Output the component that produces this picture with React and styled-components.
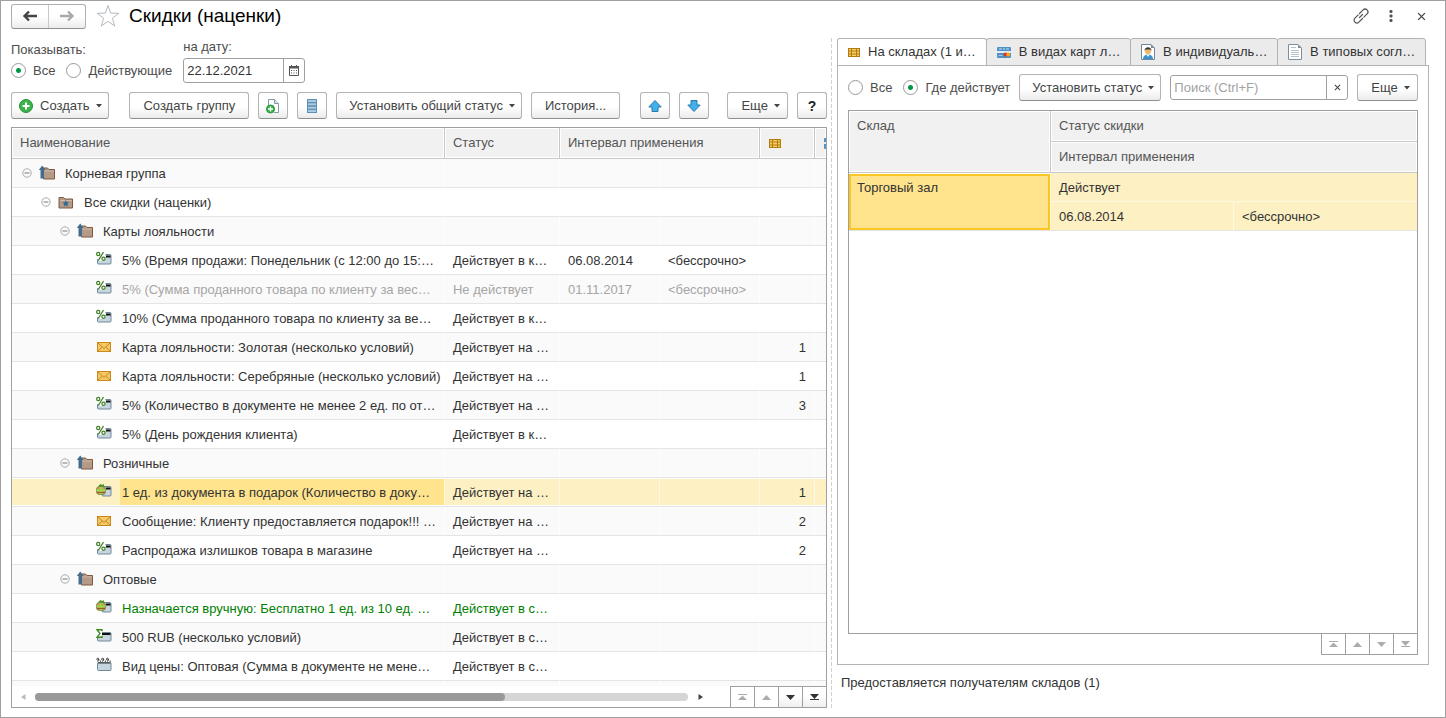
import React from "react";
import styled, { createGlobalStyle, css } from "styled-components";

const GlobalStyle = createGlobalStyle`
  * {
    box-sizing: border-box;
  }

  body {
    margin: 0;
    background: #fff;
  }

  body, button, input {
    font-family: "Liberation Sans", Arial, sans-serif;
    font-size: 13px;
    line-height: 16px;
  }
`;

const Window = styled.div`
  height: 100vh;
  display: flex;
  flex-direction: column;
  border: 1px solid #a0a0a0;
  color: #333;
`;

const TitleBar = styled.header`
  display: flex;
  align-items: center;
  height: 37px;
  padding: 0 9px 7px 10px;
  flex: none;
`;

const Title = styled.h1`
  margin: 0 auto 0 9px;
  font-size: 19px;
  line-height: 24px;
  font-weight: normal;
  color: #000;
`;

const History = styled.div`
  display: flex;
  margin-right: 10px;
  border: 1px solid #b0b0b0;
  border-bottom-color: #909090;
  border-radius: 3px;
  background: linear-gradient(#fff 50%, #ececec);
`;

const HistoryButton = styled.button`
  width: 36px;
  height: 23px;
  padding: 0;
  border: 0;
  background: none;
  display: flex;
  align-items: center;
  justify-content: center;

  & + & {
    width: 37px;
    border-left: 1px solid #c8c8c8;
  }
`;

const PlainButton = styled.button`
  width: ${p => p.$width || 30}px;
  height: 24px;
  padding: 0;
  border: 0;
  background: none;
  display: flex;
  align-items: center;
  justify-content: center;
  flex: none;
`;

const Body = styled.main`
  flex: 1;
  min-height: 0;
  display: grid;
  grid-template-columns: minmax(0, 816fr) 10px minmax(0, 592fr);
  padding: 0 16px 9px 10px;
`;

const Pane = styled.section`
  display: flex;
  flex-direction: column;
  min-width: 0;
  min-height: 0;
`;

const Splitter = styled.div`
  margin-left: 4px;
  width: 1px;
  background: repeating-linear-gradient(#d0d0d0 0 4px, transparent 4px 6px);
`;

const Filters = styled.div`
  display: flex;
  align-items: flex-end;
  gap: 11px;
  padding-top: 1px;
  color: #4d4d4d;
`;

const RadioRow = styled.div`
  display: flex;
  align-items: center;
  gap: 11px;
  height: 25px;
`;

const RadioLabel = styled.label`
  display: flex;
  align-items: center;
  gap: 7px;
  white-space: nowrap;
  color: #4d4d4d;
`;

const RadioInput = styled.input`
  appearance: none;
  width: 15px;
  height: 15px;
  margin: 0;
  border: 1px solid #999;
  border-radius: 50%;
  background: #fff;

  &:checked {
    background: radial-gradient(circle, #009646 0 2px, #fff 3px);
  }
`;

const DateField = styled.div`
  display: flex;
  flex-direction: column;
  gap: 3px;
`;

const InputBox = styled.div`
  display: flex;
  height: 25px;
  min-width: 0;
  flex: ${p => (p.$grow ? 1 : "none")};
  border: 1px solid #a0a0a0;
  border-radius: 3px;

  input {
    flex: 1;
    width: ${p => (p.$grow ? "auto" : "99px")};
    min-width: 0;
    padding: 0 3px;
    border: 0;
    outline: 0;
    background: none;
    color: #333;
  }

  input::placeholder {
    color: #a3a3a3;
  }

  button {
    width: 21px;
    height: 23px;
    border-left: 1px solid #a0a0a0;
  }
`;

const Toolbar = styled.div`
  display: flex;
  align-items: center;
  gap: 9px;
  padding: ${p => p.$padding};
`;

const ToolButton = styled.button`
  display: flex;
  align-items: center;
  justify-content: center;
  flex: none;
  gap: 6px;
  height: 27px;
  padding: 0 13px;
  border: 1px solid #b3b3b3;
  border-bottom-color: #8f8f8f;
  border-radius: 3px;
  background: linear-gradient(#fff 55%, #ebebeb);
  color: #444;
  white-space: nowrap;

  ${p =>
    p.$menu &&
    css`
      min-width: 61px;
      padding: 0 6px 0 12px;
    `}
  ${p =>
    p.$square &&
    css`
      width: 30px;
      padding: 0;
    `}
  ${p =>
    p.$lead &&
    css`
      gap: 7px;
      padding-left: 7px;
    `}
`;

const Gap = styled.span`
  width: ${p => (p.$grow ? 0 : 2)}px;
  flex: ${p => (p.$grow ? "1" : "none")};
`;

const Help = styled.span`
  font-weight: bold;
  font-size: 14px;
  color: #222;
`;

const GridBox = styled.div`
  display: flex;
  flex-direction: column;
  flex: 1;
  min-height: 0;
  border: 1px solid #a0a0a0;
`;

const GridView = styled.div`
  flex: 1;
  min-height: 0;
  overflow: hidden;
`;

const Table = styled.table`
  width: 100%;
  table-layout: fixed;
  border-collapse: separate;
  border-spacing: 0;
`;

const Th = styled.th`
  height: 31px;
  padding: 0 8px;
  overflow: hidden;
  white-space: nowrap;
  text-align: left;
  vertical-align: ${p => (p.$top ? "top" : "middle")};
  padding-top: ${p => (p.$top ? 7 : 0)}px;
  font-weight: normal;
  color: #555;
  background: #f1f1f1;
  border-right: 1px solid #c8c8c8;
  border-bottom: 1px solid #c8c8c8;
  box-shadow: inset 0 0 0 1px #fff;

  &:last-child {
    border-right: 0;
  }
`;

const IconTh = styled(Th)`
  padding: 0 0 0 9px;

  svg {
    display: block;
  }
`;

const Td = styled.td`
  height: 29px;
  padding: 2px 8px 0;
  overflow: hidden;
  white-space: nowrap;
  text-overflow: ellipsis;
  text-align: ${p => p.$align || "left"};
  border-right: 1px solid rgba(255, 255, 255, 0.6);
  border-bottom: 1px solid #e4e4e4;

  &:last-child {
    border-right: 0;
  }
`;

const NameTd = styled(Td)`
  padding: 0;
`;

const rowColors = {
  muted: "#a6a6a6",
  manual: "#008000"
};

const Row = styled.tr`
  color: ${p => rowColors[p.$tone] || "#333"};
  background: #fff;

  &:nth-child(odd) {
    background: #fafafa;
  }

  ${p =>
    p.$selected &&
    css`
      && {
        background: #fdf1c4;
      }

      td {
        box-shadow: inset 0 1px #fff, inset 0 -1px #fff;
      }
    `}
`;

const NameCell = styled.div`
  display: flex;
  align-items: center;
  height: 28px;
  padding-left: ${p => 10 + p.$level * 19}px;

  svg {
    flex: none;
  }
`;

const Toggle = styled.button`
  width: 10px;
  height: 10px;
  margin-right: 7px;
  padding: 0;
  border: 0;
  background: none;
  flex: none;
  display: flex;
`;

const Indent = styled.span`
  width: 17px;
  flex: none;
`;

const NameText = styled.span`
  flex: 1;
  min-width: 0;
  margin-left: 8px;
  padding: 2px 2px 0;
  overflow: hidden;
  text-overflow: ellipsis;
  line-height: 24px;
  background: ${p => (p.$selected ? "#ffe48d" : "none")};
`;

const GridFooter = styled.div`
  display: flex;
  height: 21px;
  flex: none;
  align-items: center;
`;

const Track = styled.div`
  flex: 1;
  height: 8px;
  border-radius: 4px;
  background: #d6d6d6;
`;

const Thumb = styled.div`
  width: 72%;
  height: 8px;
  border-radius: 4px;
  background: #999;
`;

const PagerBox = styled.div`
  display: flex;
  flex: none;
  align-self: ${p => (p.$detached ? "flex-end" : "stretch")};
  margin-left: ${p => (p.$detached ? 0 : 18)}px;
  border: solid #a0a0a0;
  border-width: ${p => (p.$detached ? "0 1px 1px 0" : "1px 0 0")};
`;

const PagerButton = styled.button`
  width: 24px;
  height: 20px;
  padding: 0;
  border: 0;
  border-left: 1px solid #a0a0a0;
  background: ${p => (p.disabled ? "#fff" : "linear-gradient(#fff 40%, #efefef)")};
  color: ${p => (p.disabled ? "#acacac" : "#333")};
  display: flex;
  align-items: center;
  justify-content: center;
`;

const Tabs = styled.div`
  display: flex;
  padding-right: 3px;
  height: 28px;
  flex: none;
  margin-bottom: -1px;
`;

const Tab = styled.button`
  flex: ${p => p.$weight} 1 0;
  min-width: 0;
  display: flex;
  align-items: center;
  gap: 8px;
  padding: 0 6px 0 10px;
  margin-left: ${p => (p.$active ? 0 : -1)}px;
  border: 1px solid #b3b3b3;
  border-bottom-color: ${p => (p.$active ? "#fff" : "#b3b3b3")};
  border-radius: 3px 3px 0 0;
  background: ${p => (p.$active ? "#fff" : "#ebebeb")};
  color: #333;

  svg {
    flex: none;
  }

  span {
    overflow: hidden;
    white-space: nowrap;
    text-overflow: ellipsis;
  }
`;

const TabPanel = styled.div`
  flex: 1;
  min-height: 0;
  display: flex;
  flex-direction: column;
  padding: 8px 10px 9px;
  border: 1px solid #b3b3b3;
`;

const StockTd = styled(Td)`
  background: #fdf1c4;
  border-right-color: #fff9e3;
  border-bottom-color: ${p => (p.$last ? "#e4e4e4" : "#fff9e3")};
`;

const ActiveTd = styled(Td)`
  padding: 6px 8px;
  vertical-align: top;
  background: #ffe48d;
  border-top: 1px solid #fff;
  border-right-color: #fff9e3;
  box-shadow: inset 0 0 0 2px #f9c623;
`;

const Summary = styled.p`
  margin: 0;
  padding: 10px 4px 17px;
`;

const Caret = () => (
  <svg width="6" height="4" viewBox="0 0 6 4">
    <path d="M0 0h6L3 3.5z" fill="#444" />
  </svg>
);

const HistoryArrow = ({ color, flip }) => (
  <svg width="16" height="12" viewBox="0 0 16 12">
    <path
      d={flip ? "M1 6h12M9 1.500L13.500 6 9 10.500" : "M15 6H3M7 1.500L2.500 6 7 10.500"}
      fill="none"
      stroke={color}
      strokeWidth="2.4"
    />
  </svg>
);

const StarIcon = () => (
  <svg width="24" height="24" viewBox="0 0 24 24">
    <path
      d="M12 1.5l2.7 7.6 8.1.2-6.4 4.9 2.3 7.8-6.7-4.6L5.300 22l2.3-7.800L1.200 9.300l8.100-.2z"
      fill="#fff"
      stroke="#b4bac0"
    />
  </svg>
);

const LinkIcon = () => (
  <svg width="18" height="18" viewBox="0 0 18 18" fill="none" stroke="#555" strokeWidth="1.2" strokeLinecap="round">
    <path d="M7.500 6.500L11.100 2.900a2.800 2.800 0 0 1 4 4L11.800 10.200" />
    <path d="M10.500 11.500L6.900 15.100a2.800 2.800 0 0 1-4-4L6.200 7.800" />
    <path d="M7.500 10.500l3-3" />
  </svg>
);

const DotsIcon = () => (
  <svg width="4" height="12" viewBox="0 0 4 12" fill="#555">
    <rect x="0.500" y="0" width="3" height="3" rx="1" />
    <rect x="0.500" y="4.500" width="3" height="3" rx="1" />
    <rect x="0.500" y="9" width="3" height="3" rx="1" />
  </svg>
);

const CrossIcon = ({ size = 8 }) => (
  <svg width={size} height={size} viewBox="0 0 8 8">
    <path d="M1 1l6 6M7 1L1 7" stroke="#444" strokeWidth="1.2" />
  </svg>
);

const CalendarIcon = () => (
  <svg width="10" height="11" viewBox="0 0 10 11">
    <path d="M.5 1.500h9v9h-9z" fill="#fff" stroke="#555" />
    <path d="M0 1h10v2.500H0zM2 0h1v2H2zM7 0h1v2H7z" fill="#555" />
    <path d="M2 5h1v1H2zm2.500 0h1v1h-1zM7 5h1v1H7zM2 7.500h1v1H2zm2.500 0h1v1h-1zM7 7.500h1v1H7z" fill="#555" />
  </svg>
);

const PlusBall = () => (
  <svg width="14" height="14" viewBox="0 0 14 14">
    <circle cx="7" cy="7" r="6.500" fill="#3cb34a" stroke="#239038" />
    <path d="M7 3.500v7M3.500 7h7" stroke="#fff" strokeWidth="2" />
  </svg>
);

const CopyIcon = () => (
  <svg width="16" height="16" viewBox="0 0 16 16">
    <path d="M3.500 8V1.500h6l4 4v9H9" fill="#fff" stroke="#8397a6" />
    <path d="M9.500 1.500v4h4" fill="#dfe6eb" stroke="#8397a6" />
    <circle cx="5.500" cy="11" r="4" fill="#3cb34a" stroke="#239038" />
    <path d="M5.500 8.500v5M3 11h5" stroke="#fff" strokeWidth="1.300" />
  </svg>
);

const ListIcon = () => (
  <svg width="10" height="14" viewBox="0 0 10 14">
    <path d="M0 0h10v14H0z" fill="#5f8fb4" />
    <path d="M1 1h8v2H1zm0 3.300h8v2H1zm0 3.400h8v2H1zM1 11h8v2H1z" fill="#a9cbe3" />
  </svg>
);

const MoveIcon = ({ down }) => (
  <svg width="14" height="12" viewBox="0 0 14 12">
    <path
      d={
        down
          ? "M4 .5h6v4.500h3.200L7 11.500.8 5H4z"
          : "M4 11.500h6V7h3.200L7 .5.8 7H4z"
      }
      fill="#43b0ee"
      stroke="#2779aa"
    />
  </svg>
);

const StockIcon = () => (
  <svg width="12" height="9" viewBox="0 0 12 9">
    <path d="M0 0h12v9H0z" fill="#b27a10" />
    <path d="M1 1h2v1.500H1zm3 0h4v1.500H4zm5 0h2v1.500H9zM1 3.500h2v2H1zm3 0h4v2H4zm5 0h2v2H9zM1 6.500h2V8H1zm3 0h4V8H4zm5 0h2V8H9z" fill="#f5cd62" />
  </svg>
);

const CardIcon = () => (
  <svg width="14" height="11" viewBox="0 0 14 11">
    <rect width="14" height="11" rx="1" fill="#4f91c4" />
    <path d="M0 4h14v2H0z" fill="#e4edf4" />
    <path d="M2 2h3M6 2h2M9 2h3" stroke="#c9e0f2" />
    <path d="M1.500 8.500h4" stroke="#a9cbe6" />
    <circle cx="8.500" cy="7.500" r="2" fill="#e0312d" />
    <circle cx="11.300" cy="7.500" r="2" fill="#f5a623" />
  </svg>
);

const PersonIcon = () => (
  <svg width="14" height="16" viewBox="0 0 14 16">
    <path d="M.5.5h9.500l3.500 3.500v11.500H.5z" fill="#fff" stroke="#6f8798" />
    <path d="M10 .5V4h3.500z" fill="#6f8798" />
    <path d="M2 15c0-3 2-4.500 5-4.500s5 1.500 5 4.500z" fill="#3993cf" />
    <path d="M5.500 10.500h3L7 13z" fill="#fff" />
    <circle cx="7" cy="7.200" r="3" fill="#f0b766" />
    <path d="M3.500 7c-.3-5 7.300-5 7 0l-1-1.500h-5z" fill="#3b3430" />
  </svg>
);

const DocIcon = () => (
  <svg width="14" height="16" viewBox="0 0 14 16">
    <path d="M.5.5h9.500l3.500 3.500v11.500H.5z" fill="#fff" stroke="#7d8f9d" />
    <path d="M10 .5V4h3.500z" fill="#7d8f9d" />
    <path d="M3 3.500h5M3 6.500h8M3 8.500h8M3 10.500h8M3 12.500h8" stroke="#b8c1c8" />
  </svg>
);

const MinusIcon = () => (
  <svg width="10" height="10" viewBox="0 0 10 10" fill="none" stroke="#aaa">
    <circle cx="5" cy="5" r="4.200" />
    <path d="M2.500 5h5" stroke="#777" />
  </svg>
);

const rowIcons = {
  folder: (
    <>
      <path d="M4.500 15V4h4l1.500 1.500h5.500V15z" fill="#b59a87" stroke="#7d583e" />
      <path d="M5.500 7h9.500" stroke="#cdb8a9" />
      <path d="M1.500 14.500V6H-.2L3.200 1.500 6.600 6H5v8.500z" fill="#456c8c" />
    </>
  ),
  starFolder: (
    <>
      <path d="M1 15V4.500h4.500L7 6h7.500v9z" fill="#b59a87" stroke="#7d583e" />
      <path d="M2 7.500h12" stroke="#cdb8a9" />
      <path d="M7.800 7l1 2.300 2.500.2-1.900 1.600.6 2.500-2.200-1.300-2.200 1.300.6-2.500-1.900-1.600 2.500-.2z" fill="#2e6a98" />
    </>
  ),
  percent: (
    <>
      <rect x="1.500" y="3.500" width="13.500" height="9.500" rx="1" fill="#c6d5df" stroke="#6f8999" />
      <path d="M9 5.500h5.500" stroke="#111" strokeWidth="2" />
      <path d="M0 1h8.500L10 5 9 10H4L0 7z" fill="#fff" />
      <path d="M7.500 1L2.300 9.500" stroke="#3f7f25" strokeWidth="1.300" />
      <circle cx="2.200" cy="3" r="1.600" fill="#fff" stroke="#3f7f25" strokeWidth="1.200" />
      <circle cx="7.500" cy="7.800" r="1.600" fill="#fff" stroke="#3f7f25" strokeWidth="1.200" />
    </>
  ),
  gift: (
    <>
      <rect x="6" y="3.500" width="9" height="9.500" rx="1" fill="#c6d5df" stroke="#6f8999" />
      <path d="M10 5.500h4.500" stroke="#111" strokeWidth="2" />
      <rect x="0.500" y="3.500" width="9" height="8" rx="3" fill="#c99f5b" stroke="#7c8540" />
      <path d="M0.500 7.200h9M5 3.500v8" stroke="#8fe04a" strokeWidth="1.400" />
      <path d="M1 9.500h8" stroke="#8d5d31" />
      <path d="M2 3.500L4.300 1 6 2l1.500-1L8.500 3.500z" fill="#43901e" />
    </>
  ),
  mail: (
    <>
      <rect x="1.500" y="4.500" width="13" height="9" fill="#f5c765" stroke="#c98a1c" />
      <path d="M2 5l6 5.500L14 5M2 13l4.200-4M14 13L9.800 9" fill="none" stroke="#b97a12" strokeWidth="0.800" />
    </>
  ),
  sum: (
    <>
      <rect x="1.500" y="4.500" width="13.500" height="8.500" rx="1" fill="#c6d5df" stroke="#6f8999" />
      <path d="M5 6h9.500" stroke="#111" strokeWidth="2" />
      <path d="M0 1h6v9H0z" fill="#fff" />
      <path d="M6 3.300V1.700H1L4 5.500 1 9.300h5V7.800" fill="none" stroke="#3f8a25" strokeWidth="1.400" />
    </>
  ),
  price: (
    <>
      <rect x="1.500" y="5.500" width="13.500" height="8" rx="1" fill="#c6d5df" stroke="#6f8999" />
      <path d="M2 6h12.500" stroke="#333" />
      <g fill="none" stroke="#333" strokeWidth="0.900">
        <circle cx="1.800" cy="2.200" r="1" />
        <circle cx="6.600" cy="2.200" r="1" />
        <circle cx="11.400" cy="2.200" r="1" />
        <path d="M2.800 2v1.500l-1.300 1M7.600 2v1.500l-1.300 1M12.400 2v1.500l-1.300 1M4.600 3.500v1.500M9.400 3.500v1.500M14.200 3.500v1.500" />
      </g>
    </>
  )
};

const RowIcon = ({ name }) => (
  <svg width="16" height="18" viewBox="0 0 16 18">
    {rowIcons[name]}
  </svg>
);

const pagerPaths = {
  first: "M0 0h9v1H0zM4.500 1.500L9 6H0z",
  up: "M4.500 1L9 6H0z",
  down: "M0 1h9L4.500 6z",
  last: "M0 0h9L4.500 5zM0 5h9v1H0z"
};

const pagerTitles = {
  first: "В начало",
  up: "Вверх",
  down: "Вниз",
  last: "В конец"
};

const Pager = ({ detached, enabled = [] }) => (
  <PagerBox $detached={detached}>
    {Object.keys(pagerPaths).map(key => (
      <PagerButton
        key={key}
        disabled={!enabled.includes(key)}
        aria-label={pagerTitles[key]}
      >
        <svg width="9" height="6" viewBox="0 0 9 6">
          <path d={pagerPaths[key]} fill="currentColor" />
        </svg>
      </PagerButton>
    ))}
  </PagerBox>
);

const Radio = ({ name, label, checked }) => (
  <RadioLabel>
    <RadioInput type="radio" name={name} defaultChecked={checked} />
    {label}
  </RadioLabel>
);

const rows = [
  { level: 0, icon: "folder", name: "Корневая группа" },
  { level: 1, icon: "starFolder", name: "Все скидки (наценки)" },
  { level: 2, icon: "folder", name: "Карты лояльности" },
  {
    icon: "percent",
    name: "5% (Время продажи: Понедельник (с 12:00 до 15:…",
    status: "Действует в к…",
    from: "06.08.2014",
    to: "<бессрочно>"
  },
  {
    icon: "percent",
    name: "5% (Сумма проданного товара по клиенту за вес…",
    status: "Не действует",
    from: "01.11.2017",
    to: "<бессрочно>",
    tone: "muted"
  },
  {
    icon: "percent",
    name: "10% (Сумма проданного товара по клиенту за ве…",
    status: "Действует в к…"
  },
  {
    icon: "mail",
    name: "Карта лояльности: Золотая (несколько условий)",
    status: "Действует на …",
    count: 1
  },
  {
    icon: "mail",
    name: "Карта лояльности: Серебряные (несколько условий)",
    status: "Действует на …",
    count: 1
  },
  {
    icon: "percent",
    name: "5% (Количество в документе не менее 2 ед. по от…",
    status: "Действует на …",
    count: 3
  },
  {
    icon: "percent",
    name: "5% (День рождения клиента)",
    status: "Действует в к…"
  },
  { level: 2, icon: "folder", name: "Розничные" },
  {
    icon: "gift",
    name: "1 ед. из документа в подарок (Количество в доку…",
    status: "Действует на …",
    count: 1,
    selected: true
  },
  {
    icon: "mail",
    name: "Сообщение: Клиенту предоставляется подарок!!! …",
    status: "Действует на …",
    count: 2
  },
  {
    icon: "percent",
    name: "Распродажа излишков товара в магазине",
    status: "Действует на …",
    count: 2
  },
  { level: 2, icon: "folder", name: "Оптовые" },
  {
    icon: "gift",
    name: "Назначается вручную: Бесплатно 1 ед. из 10 ед. …",
    status: "Действует в с…",
    tone: "manual"
  },
  {
    icon: "sum",
    name: "500 RUB (несколько условий)",
    status: "Действует в с…"
  },
  {
    icon: "price",
    name: "Вид цены: Оптовая (Сумма в документе не мене…",
    status: "Действует в с…"
  },
  {}
];

const tabs = [
  { weight: 150, icon: <StockIcon />, label: "На складах (1 и…", active: true },
  { weight: 145, icon: <CardIcon />, label: "В видах карт л…" },
  { weight: 148, icon: <PersonIcon />, label: "В индивидуаль…" },
  { weight: 149, icon: <DocIcon />, label: "В типовых согл…" }
];

const DiscountRow = ({ row }) => {
  const isGroup = row.level !== undefined;
  return (
    <Row $selected={row.selected} $tone={row.tone}>
      <NameTd>
        <NameCell $level={isGroup ? row.level : 3}>
          {isGroup ? (
            <Toggle aria-label="Свернуть">
              <MinusIcon />
            </Toggle>
          ) : (
            <Indent />
          )}
          {row.icon && <RowIcon name={row.icon} />}
          <NameText $selected={row.selected}>{row.name}</NameText>
        </NameCell>
      </NameTd>
      <Td>{row.status}</Td>
      <Td>{row.from}</Td>
      <Td>{row.to}</Td>
      <Td $align="right">{row.count}</Td>
      <Td />
    </Row>
  );
};

const Discounts = () => (
  <Pane>
    <Filters>
      <div role="radiogroup" aria-labelledby="show-label">
        <div id="show-label">Показывать:</div>
        <RadioRow>
          <Radio name="show" label="Все" checked />
          <Radio name="show" label="Действующие" />
        </RadioRow>
      </div>
      <DateField>
        <label htmlFor="date">на дату:</label>
        <InputBox>
          <input id="date" defaultValue="22.12.2021" />
          <PlainButton aria-label="Выбрать дату">
            <CalendarIcon />
          </PlainButton>
        </InputBox>
      </DateField>
    </Filters>
    <Toolbar $padding="9px 0 8px">
      <ToolButton $lead $menu>
        <PlusBall />
        Создать
        <Caret />
      </ToolButton>
      <Gap />
      <ToolButton>Создать группу</ToolButton>
      <ToolButton $square aria-label="Скопировать">
        <CopyIcon />
      </ToolButton>
      <ToolButton $square aria-label="Список">
        <ListIcon />
      </ToolButton>
      <ToolButton $menu>
        Установить общий статус
        <Caret />
      </ToolButton>
      <ToolButton>История...</ToolButton>
      <Gap />
      <ToolButton $square aria-label="Переместить вверх">
        <MoveIcon />
      </ToolButton>
      <ToolButton $square aria-label="Переместить вниз">
        <MoveIcon down />
      </ToolButton>
      <Gap $grow />
      <ToolButton $menu>
        Еще
        <Caret />
      </ToolButton>
      <ToolButton $square aria-label="Справка">
        <Help>?</Help>
      </ToolButton>
    </Toolbar>
    <GridBox>
      <GridView>
        <Table>
          <colgroup>
            <col />
            <col width="115" />
            <col width="100" />
            <col width="100" />
            <col width="55" />
            <col width="11" />
          </colgroup>
          <thead>
            <tr>
              <Th>Наименование</Th>
              <Th>Статус</Th>
              <Th colSpan={2}>Интервал применения</Th>
              <IconTh aria-label="Склады">
                <StockIcon />
              </IconTh>
              <IconTh aria-label="Карты">
                <CardIcon />
              </IconTh>
            </tr>
          </thead>
          <tbody>
            {rows.map((row, i) => (
              <DiscountRow key={i} row={row} />
            ))}
          </tbody>
        </Table>
      </GridView>
      <GridFooter>
        <PlainButton $width={23} aria-label="Прокрутить влево">
          <svg width="5" height="6" viewBox="0 0 5 6">
            <path d="M4.500 0v6L0 3z" fill="#bbb" />
          </svg>
        </PlainButton>
        <Track>
          <Thumb />
        </Track>
        <PlainButton $width={24} aria-label="Прокрутить вправо">
          <svg width="5" height="6" viewBox="0 0 5 6">
            <path d="M.5 0v6L5 3z" fill="#444" />
          </svg>
        </PlainButton>
        <Pager enabled={["down", "last"]} />
      </GridFooter>
    </GridBox>
  </Pane>
);

const Stocks = () => (
  <Pane>
    <Tabs role="tablist">
      {tabs.map(tab => (
        <Tab
          key={tab.label}
          role="tab"
          aria-selected={!!tab.active}
          $weight={tab.weight}
          $active={tab.active}
        >
          {tab.icon}
          <span>{tab.label}</span>
        </Tab>
      ))}
    </Tabs>
    <TabPanel role="tabpanel">
      <Toolbar $padding="0 0 9px">
        <RadioRow>
          <Radio name="stock" label="Все" />
          <Radio name="stock" label="Где действует" checked />
        </RadioRow>
        <ToolButton $menu>
          Установить статус
          <Caret />
        </ToolButton>
        <InputBox $grow>
          <input placeholder="Поиск (Ctrl+F)" aria-label="Поиск" />
          <PlainButton aria-label="Очистить">
            <CrossIcon size={7} />
          </PlainButton>
        </InputBox>
        <ToolButton $menu>
          Еще
          <Caret />
        </ToolButton>
      </Toolbar>
      <GridBox>
        <Table>
          <colgroup>
            <col width="202" />
            <col />
            <col />
          </colgroup>
          <thead>
            <tr>
              <Th rowSpan={2} $top>
                Склад
              </Th>
              <Th colSpan={2}>Статус скидки</Th>
            </tr>
            <tr>
              <Th colSpan={2}>Интервал применения</Th>
            </tr>
          </thead>
          <tbody>
            <tr>
              <ActiveTd rowSpan={2}>Торговый зал</ActiveTd>
              <StockTd colSpan={2}>Действует</StockTd>
            </tr>
            <tr>
              <StockTd $last>06.08.2014</StockTd>
              <StockTd $last>&lt;бессрочно&gt;</StockTd>
            </tr>
          </tbody>
        </Table>
      </GridBox>
      <Pager detached />
    </TabPanel>
    <Summary>Предоставляется получателям складов (1)</Summary>
  </Pane>
);

export default function App() {
  return (
    <Window>
      <GlobalStyle />
      <TitleBar>
        <History>
          <HistoryButton aria-label="Назад">
            <HistoryArrow color="#444" />
          </HistoryButton>
          <HistoryButton aria-label="Вперед">
            <HistoryArrow color="#aaa" flip />
          </HistoryButton>
        </History>
        <StarIcon />
        <Title>Скидки (наценки)</Title>
        <PlainButton aria-label="Ссылка">
          <LinkIcon />
        </PlainButton>
        <PlainButton aria-label="Меню">
          <DotsIcon />
        </PlainButton>
        <PlainButton aria-label="Закрыть">
          <CrossIcon size={9} />
        </PlainButton>
      </TitleBar>
      <Body>
        <Discounts />
        <Splitter />
        <Stocks />
      </Body>
    </Window>
  );
}
